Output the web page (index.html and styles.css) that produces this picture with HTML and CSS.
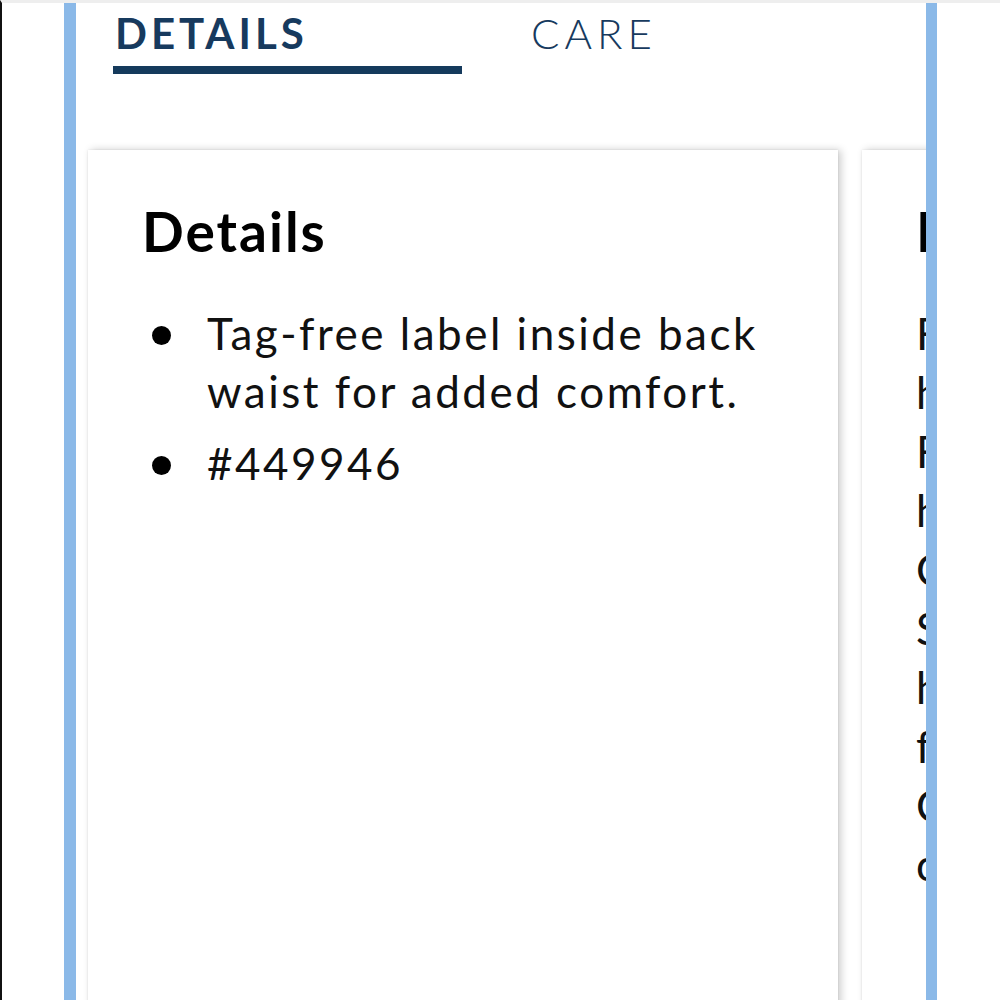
FILE: index.html
```html
<!DOCTYPE html>
<html lang="en">
<head>
    <meta charset="UTF-8">
    <meta name="viewport" content="width=device-width, initial-scale=1.0">
    <title>Product details</title>
    <link rel="stylesheet" href="styles.css">
</head>
<body>

    <div class="screen">
        <div class="frame">

            <!-- Onglets -->
            <div class="tabs">
                <div class="tab active">DETAILS</div>
                <div class="tab">CARE</div>
            </div>

            <div class="cards">
                <div class="card">
                    <h2>Details</h2>
                    <ul class="bullets">
                        <li>Tag-free label inside back waist for added comfort.</li>
                        <li>#449946</li>
                    </ul>
                </div>
                <div class="card">
                    <h2>Fabric &amp; Care</h2>
                    <p class="care">
                        Fits snug through the<br>
                        hip and thigh.<br>
                        Fabric: cotton/spandex<br>
                        hand-feel denim.<br>
                        Colors may vary from<br>
                        Screen to screen and<br>
                        how they look in store<br>
                        for best results.<br>
                        Care: machine wash<br>
                        cold, tumble dry low.
                    </p>
                </div>
            </div>

        </div>
    </div>

</body>
</html>
```

FILE: styles.css
```css
html, body {
    margin: 0;
    height: 100%;
}

body {
    background: white;
    font-family: Lato, "Open Sans", sans-serif;
    color: #111;
    overflow: hidden;
}

.screen {
    height: 100%;
    box-sizing: border-box;
    border-left: 2px solid #111;
    border-top: 3px solid #eeeeee;
}

/* Cadre bleu autour du contenu */
.frame {
    margin-left: 62px;
    width: 850px;
    height: 100%;
    border-left: 12px solid #8bb9e8;
    border-right: 11px solid #8bb9e8;
    overflow: hidden;
}

/* Onglets */
.tabs {
    display: flex;
    padding-left: 37px;
}

.tab {
    box-sizing: border-box;
    height: 71px;
    padding-top: 9px;
    font-size: 42px;
    line-height: 1;
    color: #173a5e;
}

.tab.active {
    width: 349px;
    padding-left: 2px;
    font-weight: 700;
    letter-spacing: 4px;
    border-bottom: 8px solid #153a5c;
}

.tab:not(.active) {
    margin-left: 69px;
    font-weight: 300;
    letter-spacing: 5px;
}

/* Cartes */
.cards {
    display: flex;
    gap: 24px;
    margin-top: 76px;
    padding-left: 12px;
}

.card {
    flex: 0 0 750px;
    box-sizing: border-box;
    height: 900px;
    padding: 54px 40px 0 54px;
    background: white;
    box-shadow: 3px 0 8px rgba(0, 0, 0, 0.2), 0 0 2px rgba(0, 0, 0, 0.1);
}

.card h2 {
    margin: 0 0 45px;
    font-size: 55px;
    line-height: 55px;
    font-weight: 700;
    letter-spacing: 2px;
    color: #000;
}

.bullets {
    list-style: none;
    margin: 0;
    padding: 0;
}

.bullets li {
    position: relative;
    padding-left: 65px;
    font-size: 44px;
    line-height: 58px;
    letter-spacing: 2.5px;
    margin-bottom: 14px;
}

.bullets li::before {
    content: "";
    position: absolute;
    left: 10px;
    top: 22px;
    width: 19px;
    height: 19px;
    border-radius: 50%;
    background: #000;
}

.care {
    margin: 0;
    font-size: 44px;
    line-height: 59px;
    letter-spacing: 2.5px;
    white-space: nowrap;
}
```
